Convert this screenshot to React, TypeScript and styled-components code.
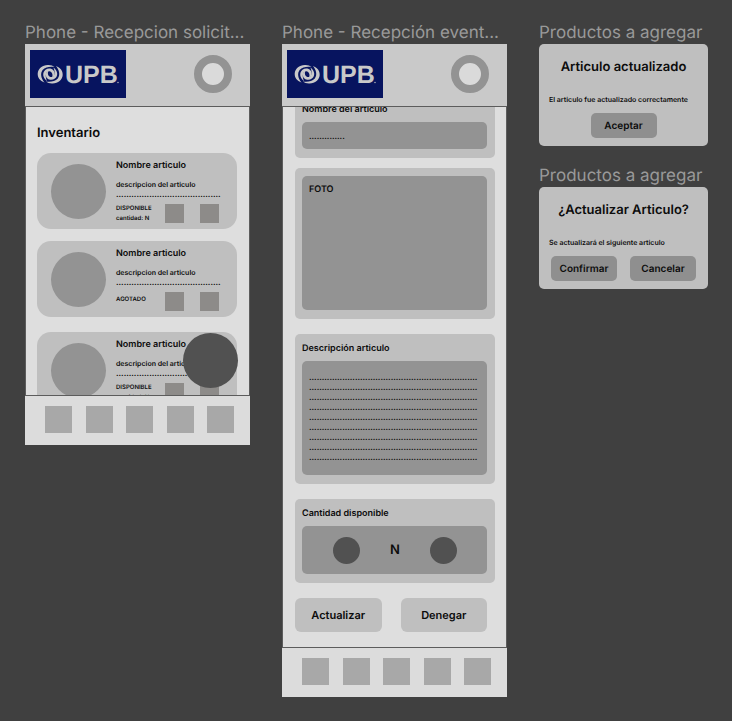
import React from "react";
import styled, { createGlobalStyle } from "styled-components";

const GlobalStyle = createGlobalStyle`
  *, *::before, *::after { box-sizing: border-box; }
  body {
    margin: 0;
    background: #404040;
    color: #0c0c0c;
    font-family: Inter, "Liberation Sans", sans-serif;
    font-weight: 600;
    text-rendering: geometricPrecision;
  }
  button, input, textarea {
    font: inherit;
    color: inherit;
    text-rendering: inherit;
    border: 0;
    padding: 0;
    margin: 0;
  }
  h1, h2, h3, p, ul { margin: 0; padding: 0; font: inherit; list-style: none; }
`;

const Board = styled.main`
  display: grid;
  grid-template-columns: minmax(0, 225fr) minmax(0, 225fr) minmax(0, 169fr);
  gap: 32px;
  align-items: start;
  padding: 20px 24px 24px 25px;
`;

const Column = styled.div`
  display: flex;
  flex-direction: column;
  gap: 17px;
  min-width: 0;
`;

const FrameTitle = styled.h2`
  height: 24px;
  line-height: 26px;
  font-size: 17px;
  font-weight: 400;
  color: #999;
  white-space: nowrap;
`;

const Header = styled.header`
  display: flex;
  justify-content: space-between;
  align-items: flex-start;
  height: 62px;
  padding: 6px 18px 0 5px;
  background: #c9c9c9;
`;

const LogoBox = styled.svg`
  display: block;
  width: 96px;
  height: 48px;
`;

const Avatar = styled.button`
  width: 38px;
  height: 38px;
  margin-top: 5px;
  border: 8px solid #939393;
  border-radius: 50%;
  background: #dadada;
`;

const Screen = styled.section<{ $height: number; $end?: boolean }>`
  position: relative;
  display: flex;
  flex-direction: column;
  justify-content: ${(p) => (p.$end ? "flex-end" : "flex-start")};
  height: ${(p) => p.$height}px;
  padding: ${(p) => (p.$end ? "0 11px 15px 12px" : "17px 12px 0 11px")};
  overflow: hidden;
  border: 1px solid #5c5c5c;
  background: #dedede;
`;

const ScreenTitle = styled.h1`
  font-size: 13px;
  line-height: 18px;
  margin-bottom: 11px;
`;

const Item = styled.li<{ $gap: number }>`
  display: flex;
  gap: 10px;
  height: 76px;
  margin-bottom: ${(p) => p.$gap}px;
  padding: 6px 18px 0 14px;
  border-radius: 14px;
  background: #bfbfbf;
`;

const Thumb = styled.div`
  flex: none;
  width: 55px;
  height: 55px;
  margin-top: 5px;
  border-radius: 50%;
  background: #939393;
`;

const ItemInfo = styled.div`
  flex: 1;
  min-width: 0;
  white-space: nowrap;
`;

const ItemName = styled.h3`
  font-size: 9px;
  line-height: 14px;
`;

const ItemText = styled.p`
  margin-top: 7px;
  font-size: 7px;
  line-height: 10px;
`;

const ItemDots = styled.p`
  font-size: 8px;
  line-height: 8px;
`;

const ItemRow = styled.div`
  display: flex;
  gap: 16px;
  margin-top: 6px;
`;

const Status = styled.div<{ $single: boolean }>`
  flex: 1;
  min-width: 0;
  font-size: 6px;
  line-height: ${(p) => (p.$single ? 16 : 10)}px;
`;

const SquareButton = styled.button`
  flex: none;
  width: 19px;
  height: 19px;
  background: #8d8b89;
`;

const FloatingButton = styled.button`
  position: absolute;
  right: 11px;
  bottom: 7px;
  width: 55px;
  height: 55px;
  border-radius: 50%;
  background: #515151;
`;

const NavBar = styled.nav`
  display: flex;
  justify-content: space-between;
  height: 49px;
  padding: 10px 16px 0 20px;
  background: #dcdcdc;
`;

const NavButton = styled.button`
  width: 27px;
  height: 27px;
  background: #a8a8a8;
`;

const Card = styled.div<{ $gap: number }>`
  display: flex;
  flex-direction: column;
  flex: none;
  margin-bottom: ${(p) => p.$gap}px;
  padding: 8px 8px 9px 7px;
  border-radius: 5px;
  background: #bfbfbf;
`;

const FieldLabel = styled.label`
  font-size: 9px;
  line-height: 13px;
  margin-bottom: 6px;
`;

const TextField = styled.input`
  width: 100%;
  height: 27px;
  padding: 0 7px;
  border-radius: 5px;
  background: #939393;
  font-size: 8px;
`;

const TextArea = styled.textarea`
  display: block;
  width: 100%;
  height: 114px;
  padding: 11px 7px;
  border-radius: 5px;
  background: #939393;
  font-size: 8px;
  line-height: 10px;
  white-space: pre;
  overflow: hidden;
  resize: none;
`;

const Photo = styled.div`
  height: 134px;
  padding: 7px;
  border-radius: 5px;
  background: #939393;
  font-size: 9px;
  line-height: 13px;
`;

const Stepper = styled.div`
  display: flex;
  justify-content: space-between;
  align-items: center;
  height: 48px;
  padding: 0 30px 0 31px;
  border-radius: 5px;
  background: #939393;
  font-size: 13px;
`;

const RoundButton = styled.button`
  width: 27px;
  height: 27px;
  border-radius: 50%;
  background: #515151;
`;

const Actions = styled.div`
  display: grid;
  grid-template-columns: 1fr 1fr;
  gap: 19px;
  flex: none;
  margin-right: 8px;
`;

const ActionButton = styled.button`
  height: 34px;
  border-radius: 6px;
  background: #bfbfbf;
  font-size: 11px;
`;

const DialogBox = styled.section`
  height: 102px;
  padding: 14px 10px 0;
  border-radius: 5px;
  background: #bfbfbf;
`;

const DialogTitle = styled.h3`
  font-size: 13px;
  line-height: 18px;
  text-align: center;
  white-space: nowrap;
`;

const DialogText = styled.p`
  margin-top: 20px;
  font-size: 7px;
  line-height: 8px;
  white-space: nowrap;
`;

const DialogActions = styled.div`
  display: flex;
  justify-content: center;
  gap: 13px;
  margin-top: 9px;
`;

const DialogButton = styled.button`
  width: 66px;
  height: 25px;
  border-radius: 5px;
  background: #8f8f8f;
  font-size: 10px;
`;

const outerArm =
  "M14.500 32.500C10 31 7.500 27.500 7.700 23.500C8 18.500 12.500 14.700 18.500 15C21 15.200 23 15.800 24.500 17C20 16.200 15.500 17 12.600 20C10 23.500 11 28.500 14.500 32.500Z";
const innerArm =
  "M17 31C12.500 28 12 22.500 15.500 19.800C19 17.200 24.500 19 24.600 23.500C24.600 25.500 23.500 27 22 27.600C23 25.500 22.500 22 20 21.400C16.500 20.800 14.300 25 17 31Z";

function Logo() {
  return (
    <LogoBox viewBox="0 0 96 48" role="img" aria-label="UPB">
      <rect width="96" height="48" fill="#07145f" />
      <g fill="#c9c9c9">
        <path d={outerArm} />
        <path d={innerArm} />
        <g transform="rotate(180 20.200 24.200)">
          <path d={outerArm} />
          <path d={innerArm} />
        </g>
      </g>
      <text
        x="35"
        y="33"
        fill="#c9c9c9"
        fontFamily="'Liberation Sans', Arial, sans-serif"
        fontWeight="700"
        fontSize="25"
      >
        UPB
      </text>
      <circle cx="88" cy="32.500" r="0.800" fill="#a4a7b8" />
    </LogoBox>
  );
}

function TopBar() {
  return (
    <Header>
      <Logo />
      <Avatar aria-label="Perfil" />
    </Header>
  );
}

function BottomBar() {
  return (
    <NavBar>
      {[1, 2, 3, 4, 5].map((n) => (
        <NavButton key={n} aria-label={`Sección ${n}`} />
      ))}
    </NavBar>
  );
}

const items = [
  { status: ["DISPONIBLE", "cantidad: N"], gap: 12 },
  { status: ["AGOTADO"], gap: 15 },
  { status: ["DISPONIBLE", "cantidad: N"], gap: 12 },
];

const descriptionDots = Array(9).fill(".".repeat(66)).join("\n");

function Inventory() {
  return (
    <div>
      <FrameTitle>Phone - Recepcion solicit...</FrameTitle>
      <TopBar />
      <Screen $height={290}>
        <ScreenTitle>Inventario</ScreenTitle>
        <ul>
          {items.map((item, i) => (
            <Item key={i} $gap={item.gap}>
              <Thumb />
              <ItemInfo>
                <ItemName>Nombre articulo</ItemName>
                <ItemText>descripcion del articulo</ItemText>
                <ItemDots>{".".repeat(41)}</ItemDots>
                <ItemRow>
                  <Status $single={item.status.length === 1}>
                    {item.status.map((line) => (
                      <p key={line}>{line}</p>
                    ))}
                  </Status>
                  <SquareButton aria-label="Editar" />
                  <SquareButton aria-label="Eliminar" />
                </ItemRow>
              </ItemInfo>
            </Item>
          ))}
        </ul>
        <FloatingButton aria-label="Agregar" />
      </Screen>
      <BottomBar />
    </div>
  );
}

function ItemForm() {
  return (
    <div>
      <FrameTitle>Phone - Recepción event...</FrameTitle>
      <TopBar />
      <Screen $height={542} $end>
        <Card $gap={10}>
          <FieldLabel htmlFor="name">Nombre del articulo</FieldLabel>
          <TextField id="name" defaultValue=".............." />
        </Card>
        <Card $gap={15}>
          <Photo>FOTO</Photo>
        </Card>
        <Card $gap={15}>
          <FieldLabel htmlFor="description">Descripción articulo</FieldLabel>
          <TextArea id="description" defaultValue={descriptionDots} />
        </Card>
        <Card $gap={15}>
          <FieldLabel as="p">Cantidad disponible</FieldLabel>
          <Stepper>
            <RoundButton aria-label="Disminuir" />
            <span>N</span>
            <RoundButton aria-label="Aumentar" />
          </Stepper>
        </Card>
        <Actions>
          <ActionButton>Actualizar</ActionButton>
          <ActionButton>Denegar</ActionButton>
        </Actions>
      </Screen>
      <BottomBar />
    </div>
  );
}

function Dialog(props: { title: string; text: string; actions: string[] }) {
  return (
    <div>
      <FrameTitle>Productos a agregar</FrameTitle>
      <DialogBox role="dialog" aria-label={props.title}>
        <DialogTitle>{props.title}</DialogTitle>
        <DialogText>{props.text}</DialogText>
        <DialogActions>
          {props.actions.map((a) => (
            <DialogButton key={a}>{a}</DialogButton>
          ))}
        </DialogActions>
      </DialogBox>
    </div>
  );
}

export default function App() {
  return (
    <>
      <GlobalStyle />
      <Board>
        <Inventory />
        <ItemForm />
        <Column>
          <Dialog
            title="Articulo actualizado"
            text="El articulo fue actualizado correctamente"
            actions={["Aceptar"]}
          />
          <Dialog
            title="¿Actualizar Articulo?"
            text="Se actualizará el siguiente articulo"
            actions={["Confirmar", "Cancelar"]}
          />
        </Column>
      </Board>
    </>
  );
}
